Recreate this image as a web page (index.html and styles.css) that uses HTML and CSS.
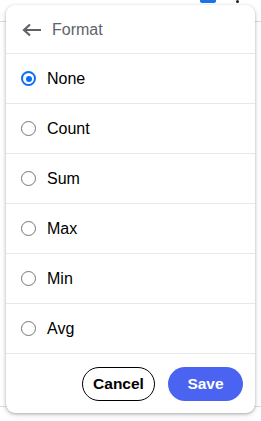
FILE: index.html
```html
<!DOCTYPE html>
<html>
<head>
<meta charset="utf-8">
<link rel="stylesheet" href="styles.css">
</head>
<body>
<div class="bg">
  <div class="bg-line bg-line-top"></div>
  <div class="bg-blue"></div>
  <div class="bg-dot"></div>
  <div class="bg-line bg-line-bottom"></div>
</div>
<div class="panel">
  <div class="header">
    <svg class="back" width="20" height="14" viewBox="0 0 20 14">
      <path d="M19 7H3M8 1.5L2 7l6 5.5" fill="none" stroke="#5f6368" stroke-width="2.2" stroke-linejoin="miter"/>
    </svg>
    <span class="title">Format</span>
  </div>
  <div class="row"><span class="radio checked"></span><span class="label">None</span></div>
  <div class="row"><span class="radio"></span><span class="label">Count</span></div>
  <div class="row"><span class="radio"></span><span class="label">Sum</span></div>
  <div class="row"><span class="radio"></span><span class="label">Max</span></div>
  <div class="row"><span class="radio"></span><span class="label">Min</span></div>
  <div class="row"><span class="radio"></span><span class="label">Avg</span></div>
  <div class="footer">
    <button class="btn cancel">Cancel</button>
    <button class="btn save">Save</button>
  </div>
</div>
</body>
</html>
```
FILE: styles.css
```css
html, body {
  margin: 0;
  padding: 0;
  background: #ffffff;
  width: 261px;
  height: 421px;
  overflow: hidden;
  font-family: "Liberation Sans", Arial, sans-serif;
}
.bg {
  position: absolute;
  inset: 0;
  z-index: 0;
}
.bg-line {
  position: absolute;
  left: 0;
  right: 0;
  height: 1px;
  background: #dadce0;
}
.bg-line-top { top: 21px; }
.bg-line-bottom { top: 406px; }
.bg-blue {
  position: absolute;
  left: 200px;
  top: 0;
  width: 16px;
  height: 3px;
  background: #1a73e8;
  border-radius: 0 0 2px 2px;
}
.bg-dot {
  position: absolute;
  left: 236px;
  top: 0;
  width: 3px;
  height: 3px;
  background: #202124;
  border-radius: 50%;
}
.panel {
  position: relative;
  z-index: 1;
  margin: 5px 0 0 6px;
  width: 249px;
  height: 408px;
  background: #fff;
  border-radius: 9px;
  box-shadow: 0 1px 3px rgba(0,0,0,0.25), 0 2px 6px rgba(0,0,0,0.12);
  display: flex;
  flex-direction: column;
}
.header {
  height: 49px;
  box-sizing: border-box;
  border-bottom: 1px solid #e8e8e8;
  display: flex;
  align-items: center;
  padding-left: 16px;
  padding-top: 1px;
}
.back { display: block; margin-right: 10px; }
.title {
  font-size: 16px;
  color: #5f6368;
}
.row {
  height: 50px;
  box-sizing: border-box;
  border-bottom: 1px solid #e8e8e8;
  display: flex;
  align-items: center;
  padding-left: 15px;
}
.radio {
  width: 15px;
  height: 15px;
  box-sizing: border-box;
  border: 1.5px solid #767676;
  border-radius: 50%;
  margin-right: 11px;
  position: relative;
}
.radio.checked {
  border: 2px solid #0b6ef5;
}
.radio.checked::after {
  content: "";
  position: absolute;
  left: 2.5px;
  top: 2.5px;
  width: 6px;
  height: 6px;
  border-radius: 50%;
  background: #0b6ef5;
}
.label {
  font-size: 16px;
  color: #000;
}
.footer {
  flex: 1;
  display: flex;
  justify-content: flex-end;
  align-items: center;
  gap: 13px;
  padding-right: 12px;
}
.btn {
  font-family: "Liberation Sans", Arial, sans-serif;
  font-size: 15.5px;
  font-weight: bold;
  height: 34px;
  border-radius: 17px;
  padding: 0 10px;
  cursor: pointer;
}
.cancel {
  background: #fff;
  color: #000;
  border: 1px solid #000;
  width: 73px;
}
.save {
  background: #4a63f0;
  color: #fff;
  border: none;
  width: 75px;
}
```
